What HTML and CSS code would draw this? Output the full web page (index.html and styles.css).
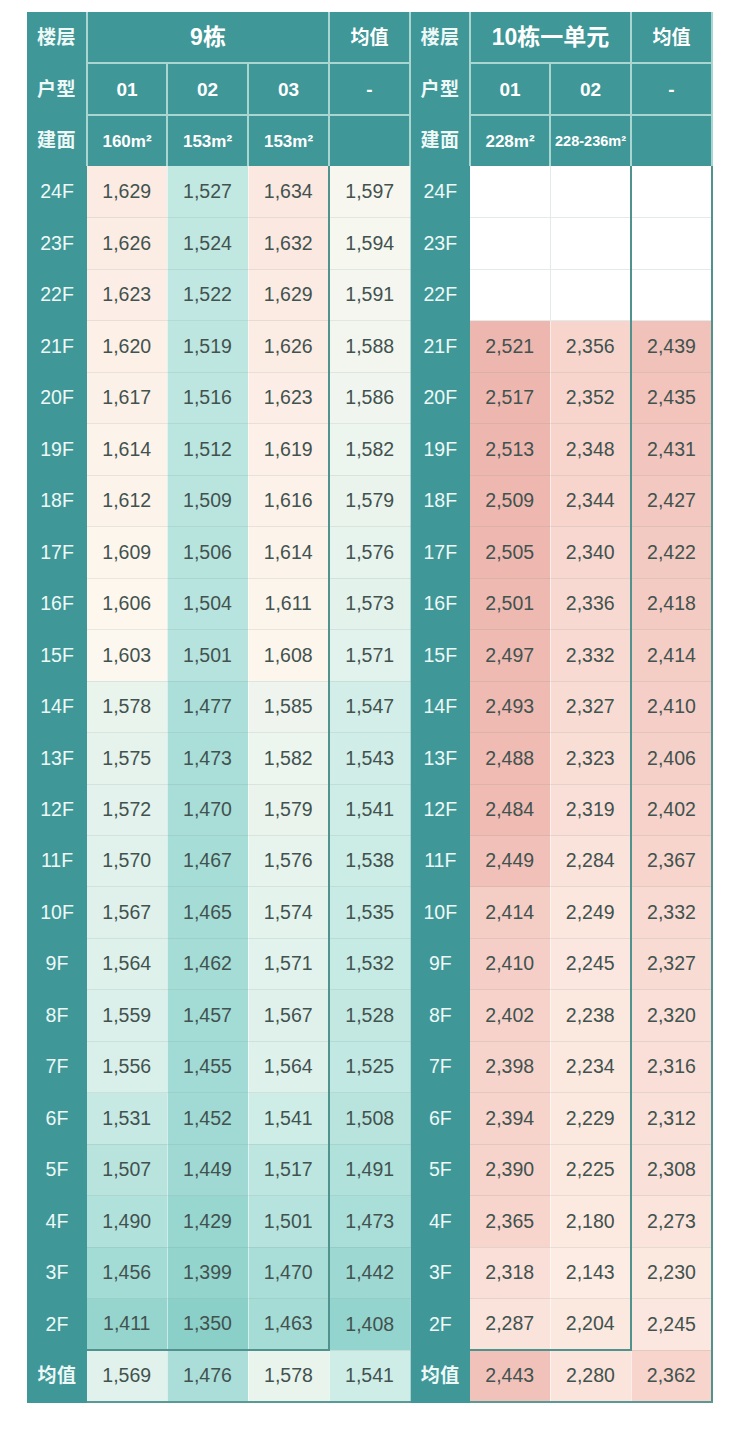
FILE: index.html
```html
<!DOCTYPE html>
<html lang="zh-CN">
<head>
<meta charset="utf-8">
<title>楼层价格表</title>
<link rel="stylesheet" href="styles.css">
</head>
<body>
<table class="price">
<colgroup>
<col class="c-floor"><col class="c-a"><col class="c-b"><col class="c-b"><col class="c-b">
<col class="c-floor"><col class="c-a"><col class="c-b"><col class="c-b">
</colgroup>
<thead>
<tr>
<th class="fl lab">楼层</th><th class="hd big" colspan="3">9栋</th><th class="hd">均值</th>
<th class="fl lab">楼层</th><th class="hd big" colspan="2">10栋一单元</th><th class="hd last">均值</th>
</tr>
<tr>
<th class="fl lab">户型</th><th class="hd">01</th><th class="hd">02</th><th class="hd">03</th><th class="hd">-</th>
<th class="fl lab">户型</th><th class="hd">01</th><th class="hd">02</th><th class="hd last">-</th>
</tr>
<tr>
<th class="fl lab">建面</th><th class="hd area">160m²</th><th class="hd area">153m²</th><th class="hd area">153m²</th><th class="hd"></th>
<th class="fl lab">建面</th><th class="hd area">228m²</th><th class="hd area small">228-236m²</th><th class="hd last"></th>
</tr>
</thead>
<tbody>
<tr><th class="fl">24F</th><td data-s="a">1,629</td><td data-s="a">1,527</td><td data-s="a" class="br">1,634</td><td data-s="a">1,597</td><th class="fl">24F</th><td class="empty"></td><td class="empty br"></td><td class="empty er"></td></tr>
<tr><th class="fl">23F</th><td data-s="a">1,626</td><td data-s="a">1,524</td><td data-s="a" class="br">1,632</td><td data-s="a">1,594</td><th class="fl">23F</th><td class="empty"></td><td class="empty br"></td><td class="empty er"></td></tr>
<tr><th class="fl">22F</th><td data-s="a">1,623</td><td data-s="a">1,522</td><td data-s="a" class="br">1,629</td><td data-s="a">1,591</td><th class="fl">22F</th><td class="empty"></td><td class="empty br"></td><td class="empty er"></td></tr>
<tr><th class="fl">21F</th><td data-s="a">1,620</td><td data-s="a">1,519</td><td data-s="a" class="br">1,626</td><td data-s="a">1,588</td><th class="fl">21F</th><td data-s="b">2,521</td><td data-s="b" class="br">2,356</td><td data-s="b" class="er">2,439</td></tr>
<tr><th class="fl">20F</th><td data-s="a">1,617</td><td data-s="a">1,516</td><td data-s="a" class="br">1,623</td><td data-s="a">1,586</td><th class="fl">20F</th><td data-s="b">2,517</td><td data-s="b" class="br">2,352</td><td data-s="b" class="er">2,435</td></tr>
<tr><th class="fl">19F</th><td data-s="a">1,614</td><td data-s="a">1,512</td><td data-s="a" class="br">1,619</td><td data-s="a">1,582</td><th class="fl">19F</th><td data-s="b">2,513</td><td data-s="b" class="br">2,348</td><td data-s="b" class="er">2,431</td></tr>
<tr><th class="fl">18F</th><td data-s="a">1,612</td><td data-s="a">1,509</td><td data-s="a" class="br">1,616</td><td data-s="a">1,579</td><th class="fl">18F</th><td data-s="b">2,509</td><td data-s="b" class="br">2,344</td><td data-s="b" class="er">2,427</td></tr>
<tr><th class="fl">17F</th><td data-s="a">1,609</td><td data-s="a">1,506</td><td data-s="a" class="br">1,614</td><td data-s="a">1,576</td><th class="fl">17F</th><td data-s="b">2,505</td><td data-s="b" class="br">2,340</td><td data-s="b" class="er">2,422</td></tr>
<tr><th class="fl">16F</th><td data-s="a">1,606</td><td data-s="a">1,504</td><td data-s="a" class="br">1,611</td><td data-s="a">1,573</td><th class="fl">16F</th><td data-s="b">2,501</td><td data-s="b" class="br">2,336</td><td data-s="b" class="er">2,418</td></tr>
<tr><th class="fl">15F</th><td data-s="a">1,603</td><td data-s="a">1,501</td><td data-s="a" class="br">1,608</td><td data-s="a">1,571</td><th class="fl">15F</th><td data-s="b">2,497</td><td data-s="b" class="br">2,332</td><td data-s="b" class="er">2,414</td></tr>
<tr><th class="fl">14F</th><td data-s="a">1,578</td><td data-s="a">1,477</td><td data-s="a" class="br">1,585</td><td data-s="a">1,547</td><th class="fl">14F</th><td data-s="b">2,493</td><td data-s="b" class="br">2,327</td><td data-s="b" class="er">2,410</td></tr>
<tr><th class="fl">13F</th><td data-s="a">1,575</td><td data-s="a">1,473</td><td data-s="a" class="br">1,582</td><td data-s="a">1,543</td><th class="fl">13F</th><td data-s="b">2,488</td><td data-s="b" class="br">2,323</td><td data-s="b" class="er">2,406</td></tr>
<tr><th class="fl">12F</th><td data-s="a">1,572</td><td data-s="a">1,470</td><td data-s="a" class="br">1,579</td><td data-s="a">1,541</td><th class="fl">12F</th><td data-s="b">2,484</td><td data-s="b" class="br">2,319</td><td data-s="b" class="er">2,402</td></tr>
<tr><th class="fl">11F</th><td data-s="a">1,570</td><td data-s="a">1,467</td><td data-s="a" class="br">1,576</td><td data-s="a">1,538</td><th class="fl">11F</th><td data-s="b">2,449</td><td data-s="b" class="br">2,284</td><td data-s="b" class="er">2,367</td></tr>
<tr><th class="fl">10F</th><td data-s="a">1,567</td><td data-s="a">1,465</td><td data-s="a" class="br">1,574</td><td data-s="a">1,535</td><th class="fl">10F</th><td data-s="b">2,414</td><td data-s="b" class="br">2,249</td><td data-s="b" class="er">2,332</td></tr>
<tr><th class="fl">9F</th><td data-s="a">1,564</td><td data-s="a">1,462</td><td data-s="a" class="br">1,571</td><td data-s="a">1,532</td><th class="fl">9F</th><td data-s="b">2,410</td><td data-s="b" class="br">2,245</td><td data-s="b" class="er">2,327</td></tr>
<tr><th class="fl">8F</th><td data-s="a">1,559</td><td data-s="a">1,457</td><td data-s="a" class="br">1,567</td><td data-s="a">1,528</td><th class="fl">8F</th><td data-s="b">2,402</td><td data-s="b" class="br">2,238</td><td data-s="b" class="er">2,320</td></tr>
<tr><th class="fl">7F</th><td data-s="a">1,556</td><td data-s="a">1,455</td><td data-s="a" class="br">1,564</td><td data-s="a">1,525</td><th class="fl">7F</th><td data-s="b">2,398</td><td data-s="b" class="br">2,234</td><td data-s="b" class="er">2,316</td></tr>
<tr><th class="fl">6F</th><td data-s="a">1,531</td><td data-s="a">1,452</td><td data-s="a" class="br">1,541</td><td data-s="a">1,508</td><th class="fl">6F</th><td data-s="b">2,394</td><td data-s="b" class="br">2,229</td><td data-s="b" class="er">2,312</td></tr>
<tr><th class="fl">5F</th><td data-s="a">1,507</td><td data-s="a">1,449</td><td data-s="a" class="br">1,517</td><td data-s="a">1,491</td><th class="fl">5F</th><td data-s="b">2,390</td><td data-s="b" class="br">2,225</td><td data-s="b" class="er">2,308</td></tr>
<tr><th class="fl">4F</th><td data-s="a">1,490</td><td data-s="a">1,429</td><td data-s="a" class="br">1,501</td><td data-s="a">1,473</td><th class="fl">4F</th><td data-s="b">2,365</td><td data-s="b" class="br">2,180</td><td data-s="b" class="er">2,273</td></tr>
<tr><th class="fl">3F</th><td data-s="a">1,456</td><td data-s="a">1,399</td><td data-s="a" class="br">1,470</td><td data-s="a">1,442</td><th class="fl">3F</th><td data-s="b">2,318</td><td data-s="b" class="br">2,143</td><td data-s="b" class="er">2,230</td></tr>
<tr><th class="fl">2F</th><td data-s="a" class="bb">1,411</td><td data-s="a" class="bb">1,350</td><td data-s="a" class="br bb">1,463</td><td data-s="a">1,408</td><th class="fl">2F</th><td data-s="b" class="bb">2,287</td><td data-s="b" class="br bb">2,204</td><td data-s="b" class="er">2,245</td></tr>
<tr class="avg"><th class="fl lab">均值</th><td data-s="a">1,569</td><td data-s="a">1,476</td><td data-s="a">1,578</td><td data-s="a">1,541</td><th class="fl lab">均值</th><td data-s="b">2,443</td><td data-s="b">2,280</td><td data-s="b" class="er">2,362</td></tr>
</tbody>
</table>
<script src="script.js"></script>
</body>
</html>
```

FILE: styles.css
```css
html, body {
  margin: 0;
  padding: 0;
  background: #ffffff;
}

body {
  font-family: "Liberation Sans", "Noto Sans CJK SC", Arial, sans-serif;
  color: #3f514e;
}

.price {
  margin: 12px 0 0 27px;
  width: 685px;
  table-layout: fixed;
  border-collapse: collapse;
  border-spacing: 0;
}

.c-floor { width: 60px; }
.c-a { width: 80px; }
.c-b { width: 81px; }

.price tr {
  height: 51.48px;
}

.price th,
.price td {
  padding: 0;
  text-align: center;
  vertical-align: middle;
  line-height: 1;
  white-space: nowrap;
}

/* floor label column */
.fl {
  background: #3f9797;
  color: #eef9f7;
  font-size: 19.5px;
  font-weight: normal;
  border: none;
}

.fl.lab {
  font-weight: bold;
  font-size: 19px;
  letter-spacing: 0.5px;
}

/* header cells */
.hd {
  background: #3f9797;
  color: #ffffff;
  font-size: 19px;
  font-weight: bold;
  border-left: 2px solid #aad6d2;
  border-bottom: 2px solid #aad6d2;
  border-right: 2px solid #aad6d2;
}

.hd.big {
  font-size: 23px;
}

.hd.area {
  font-size: 17px;
}

.hd.area.small {
  font-size: 14.5px;
}

thead tr:last-child .hd {
  border-bottom: none;
}

/* data cells */
.price td {
  font-size: 19.5px;
  color: #42524f;
  border-right: 1px solid rgba(255, 255, 255, 0.55);
  border-bottom: 1px solid rgba(110, 135, 130, 0.14);
}

.price td.empty {
  background: #ffffff;
  border-right: 1px solid #e3ebea;
  border-bottom: 1px solid #e3ebea;
}

/* dark outline of the floor blocks */
.price td.br {
  border-right: 2px solid #4f928e;
}

.price td.bb {
  border-bottom: 2px solid #4f928e;
}

.price td.er {
  border-right: 2px solid #4f928e;
}

.price tr.avg td {
  border-bottom: 2px solid #5a9a96;
}

.price tr.avg th {
  border-bottom: 2px solid #3f9797;
}
```

FILE: script.js
```js
(function () {
  var scales = {
    a: [
      [1350, [138, 208, 201]],
      [1430, [152, 214, 208]],
      [1452, [161, 218, 212]],
      [1490, [177, 225, 219]],
      [1527, [194, 232, 226]],
      [1545, [210, 238, 232]],
      [1571, [226, 242, 236]],
      [1588, [242, 246, 239]],
      [1605, [253, 248, 239]],
      [1614, [252, 243, 234]],
      [1634, [251, 232, 224]]
    ],
    b: [
      [2143, [252, 236, 227]],
      [2240, [251, 232, 223]],
      [2320, [249, 223, 215]],
      [2345, [247, 213, 205]],
      [2400, [246, 211, 203]],
      [2440, [241, 194, 186]],
      [2521, [237, 182, 174]]
    ]
  };

  function colour(stops, v) {
    if (v <= stops[0][0]) return stops[0][1];
    for (var i = 1; i < stops.length; i++) {
      if (v <= stops[i][0]) {
        var a = stops[i - 1], b = stops[i];
        var t = (v - a[0]) / (b[0] - a[0]);
        return [0, 1, 2].map(function (k) {
          return Math.round(a[1][k] + (b[1][k] - a[1][k]) * t);
        });
      }
    }
    return stops[stops.length - 1][1];
  }

  var cells = document.querySelectorAll('td[data-s]');
  for (var i = 0; i < cells.length; i++) {
    var td = cells[i];
    var v = parseFloat(td.textContent.replace(/,/g, ''));
    var c = colour(scales[td.getAttribute('data-s')], v);
    td.style.backgroundColor = 'rgb(' + c.join(',') + ')';
  }
})();
```
